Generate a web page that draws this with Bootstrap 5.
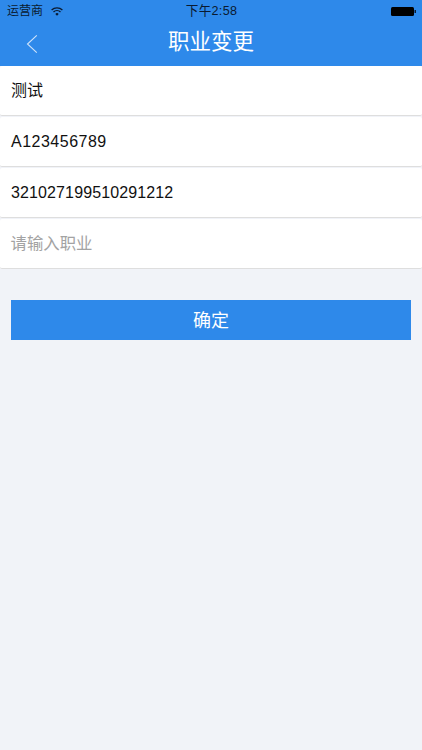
<!DOCTYPE html>
<html lang="zh">
<head>
<meta charset="utf-8">
<link rel="stylesheet" href="https://cdn.jsdelivr.net/npm/bootstrap@5.3.0/dist/css/bootstrap.min.css">
<style>
html,body{height:100%;}
body{background:#f1f3f8;font-family:"Liberation Sans","Noto Sans CJK SC",sans-serif;color:#111;}
.app-head{background:#2e89ea;height:66px;}
.status-line{height:22px;padding:0 6px 0 7px;font-size:12px;line-height:22px;position:relative;color:#0a1a30;}
.status-time{position:absolute;left:1px;right:0;top:0;text-align:center;font-size:12.6px;letter-spacing:.3px;}
.title-line{height:44px;position:relative;}
.title-text{color:#fff;font-size:21.5px;line-height:40px;text-align:center;}
.back-icon{position:absolute;left:26px;top:12px;}
.form-line{background:#fff;height:50px;border-bottom:1px solid #dedede;border-radius:2px;margin-bottom:1px;padding:0 11px;font-size:16px;line-height:49px;}
.form-line:last-child{margin-bottom:0;}
.wide-text{letter-spacing:.5px;}
.num-text{letter-spacing:.12px;}
.hint-text{color:#a3a3a3;font-size:16.4px;padding-left:10.5px;}
.ok-wrap{padding:31px 11px 0;}
.ok-btn{background:#2e89ea;border:0;border-radius:0;color:#fff;height:40px;font-size:18px;line-height:40px;padding:1px 0 0;width:100%;}
</style>
</head>
<body>
<div class="app-head">
  <div class="status-line d-flex align-items-center gap-2">
    <span>运营商</span>
    <svg width="12" height="9" viewBox="0 0 12 9" fill="none" stroke="#0a1a30" stroke-width="1.3"><path d="M.6 3a7.900 7.900 0 0 1 10.800 0"/><path d="M2.500 5a5 5 0 0 1 7 0"/><path d="M6 8.800 4.300 6.900a2.500 2.500 0 0 1 3.400 0z" fill="#0a1a30" stroke="none"/></svg>
    <span class="status-time">下午2:58</span>
    <svg class="ms-auto" width="25" height="9" viewBox="0 0 25 9"><rect x="0" y="0" width="23" height="9" rx="1.5" fill="#000"/><rect x="23.500" y="3" width="1.500" height="3" fill="#0a1a30"/></svg>
  </div>
  <div class="title-line">
    <svg class="back-icon" width="12" height="20" viewBox="0 0 12 20" fill="none" stroke="#cfe3fa" stroke-width="1.100"><path d="M10.800 1.300 1.500 10l9.300 8.700"/></svg>
    <div class="title-text">职业变更</div>
  </div>
</div>
<div>
  <div class="form-line">测试</div>
  <div class="form-line wide-text">A123456789</div>
  <div class="form-line num-text">321027199510291212</div>
  <div class="form-line hint-text">请输入职业</div>
</div>
<div class="ok-wrap">
  <button type="button" class="btn ok-btn">确定</button>
</div>
<script src="https://cdn.jsdelivr.net/npm/bootstrap@5.3.0/dist/js/bootstrap.bundle.min.js"></script>
</body>
</html>
